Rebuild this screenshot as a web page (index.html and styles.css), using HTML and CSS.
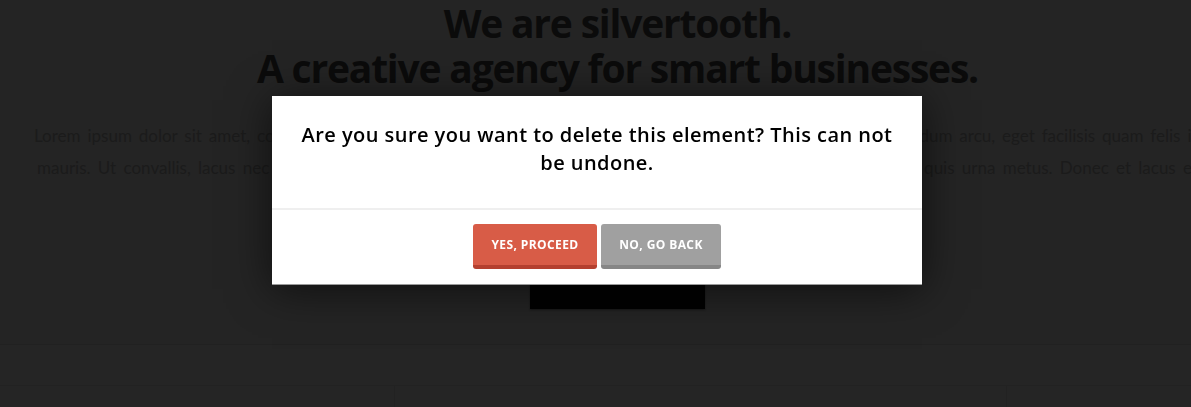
FILE: index.html
```html
<!DOCTYPE html>
<html lang="en">
<head>
<meta charset="utf-8">
<title>Silvertooth</title>
<link rel="stylesheet" href="styles.css">
</head>
<body>
<div class="page">
  <section class="hero">
    <h1 class="hero-title">We are silvertooth.<br>A creative agency for smart businesses.</h1>
    <div class="hero-text">
      <div class="hero-line">Lorem ipsum dolor sit amet, consectetur adipiscing elit. Nulla tincidunt, nisl et aliquet dictum, velit quis nibh bibendum arcu, eget facilisis quam felis id</div>
      <div class="hero-line hero-line-2">mauris. Ut convallis, lacus nec tempor pretium, mi sapien vehicula felis nisl, ac pulvinar tortor sed lectus a neque quis urna metus. Donec et lacus et</div>
    </div>
    <a class="hero-button">Get in touch</a>
  </section>
  <section class="band"></section>
  <section class="columns">
    <div class="col col-a"></div>
    <div class="col col-b"></div>
    <div class="col col-c"></div>
  </section>
</div>

<div class="overlay">
  <div class="dialog">
    <p class="dialog-message">Are you sure you want to delete this element? This can not be undone.</p>
    <div class="dialog-actions">
      <button class="btn btn-confirm">Yes, proceed</button>
      <button class="btn btn-cancel">No, go back</button>
    </div>
  </div>
</div>
</body>
</html>
```
FILE: styles.css
```css
html, body {
  margin: 0;
  padding: 0;
}
body {
  background: #252525;
  overflow: hidden;
  width: 1191px;
  height: 407px;
}
.page {
  width: 1235px;
  text-align: center;
}
.hero {
  padding-top: 0;
  height: 345px;
  background: #242424;
  border-bottom: 1px solid #212121;
  box-sizing: border-box;
}
.hero-title {
  margin: 0;
  font-family: "Open Sans", "Liberation Sans", sans-serif;
  font-weight: 700;
  font-size: 39px;
  line-height: 45px;
  letter-spacing: -1.2px;
  color: #0b0b0b;
}
.hero-text {
  margin: 30px 34px 0;
  font-family: "Lato", "Liberation Sans", sans-serif;
  font-size: 17px;
  line-height: 32px;
  color: #1b1b1b;
}
.hero-line {
  text-align: justify;
  text-align-last: justify;
}
.hero-line-2 {
  margin: 0 3px;
}
.hero-button {
  display: block;
  width: 175px;
  height: 56px;
  margin: 69px auto 0;
  background: #020202;
  color: #020202;
  font-family: "Lato", sans-serif;
  font-size: 14px;
  line-height: 56px;
  box-shadow: 0 1px 2px rgba(0,0,0,0.4);
}
.band {
  height: 40px;
  background: #252525;
  border-bottom: 1px solid #222;
}
.columns {
  display: flex;
  height: 40px;
}
.col {
  background: #252525;
}
.col-a { width: 394px; border-right: 1px solid #222; }
.col-b { width: 611px; border-right: 1px solid #222; }
.col-c { flex: 1; }

.overlay {
  position: fixed;
  inset: 0;
}
.dialog {
  position: absolute;
  top: 96px;
  left: 272px;
  width: 650px;
  background: #fff;
  border-bottom: 1px solid #9a9a9a;
  box-shadow: 0 4px 40px rgba(0,0,0,0.6);
  text-align: center;
}
.dialog-message {
  margin: 0;
  padding: 25px 25px 31px;
  font-family: "Open Sans", "Liberation Sans", sans-serif;
  font-weight: 600;
  font-size: 20px;
  line-height: 28px;
  letter-spacing: 0.45px;
  color: #000;
  border-bottom: 2px solid #efefef;
}
.dialog-actions {
  display: flex;
  justify-content: center;
  gap: 4px;
  padding: 14px 0 15px;
}
.btn {
  height: 45px;
  padding: 0 18px;
  border: none;
  border-radius: 3px;
  font-family: "Open Sans", "Liberation Sans", sans-serif;
  font-weight: 700;
  font-size: 12px;
  letter-spacing: 0.4px;
  text-transform: uppercase;
  color: #fff;
  cursor: pointer;
}
.btn-confirm {
  background: #d85c47;
  border-bottom: 4px solid #b4402f;
  width: 124px;
}
.btn-cancel {
  background: #a0a0a0;
  border-bottom: 4px solid #868686;
  width: 120px;
}
```
